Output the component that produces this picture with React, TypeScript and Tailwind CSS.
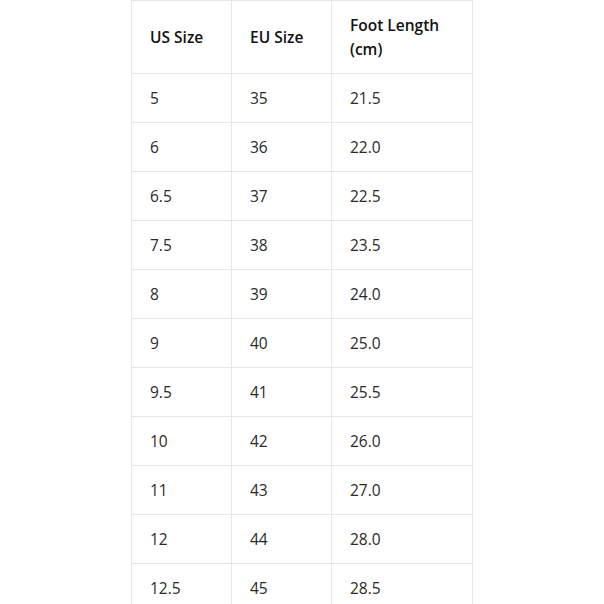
import React from "react";

const rows = [
  ["5", "35", "21.5"],
  ["6", "36", "22.0"],
  ["6.5", "37", "22.5"],
  ["7.5", "38", "23.5"],
  ["8", "39", "24.0"],
  ["9", "40", "25.0"],
  ["9.5", "41", "25.5"],
  ["10", "42", "26.0"],
  ["11", "43", "27.0"],
  ["12", "44", "28.0"],
  ["12.5", "45", "28.5"],
];

export default function App() {
  return (
    <div className="w-[604px] h-[604px] overflow-hidden bg-white flex justify-center" style={{ fontFamily: '"Open Sans", "Noto Sans", sans-serif' }}>
      <table className="border-collapse text-[15.5px] leading-6 text-[#2a2a2a] w-[341px] table-fixed h-fit">
        <colgroup>
          <col className="w-[100px]" />
          <col className="w-[100px]" />
          <col className="w-[141px]" />
        </colgroup>
        <thead>
          <tr>
            <th className="border border-[#e6e6e6] px-[18px] py-3 text-left font-semibold text-[#111]">US Size</th>
            <th className="border border-[#e6e6e6] px-[18px] py-3 text-left font-semibold text-[#111]">EU Size</th>
            <th className="border border-[#e6e6e6] px-[18px] py-3 text-left font-semibold text-[#111]">Foot Length (cm)</th>
          </tr>
        </thead>
        <tbody>
          {rows.map((r, i) => (
            <tr key={i}>
              {r.map((c, j) => (
                <td key={j} className="border border-[#e6e6e6] px-[18px] py-3 h-[49px]">{c}</td>
              ))}
            </tr>
          ))}
        </tbody>
      </table>
    </div>
  );
}
